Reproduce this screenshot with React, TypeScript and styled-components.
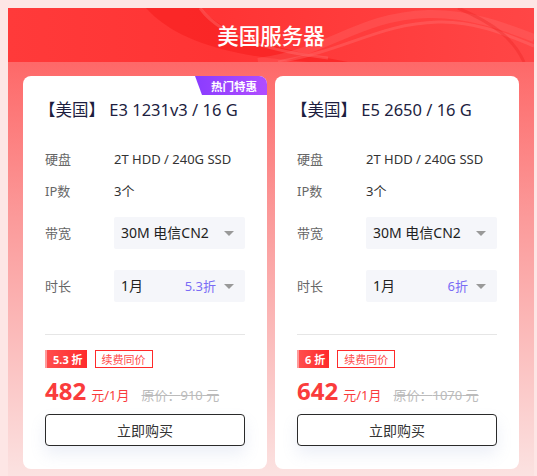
import React from 'react';
import styled, { createGlobalStyle } from 'styled-components';

const GlobalStyle = createGlobalStyle`
	html, body {
		background: #fde6e5;
	}
	body {
		margin: 8px 0 0 8px;
		font-family: 'Noto Sans', 'Noto Sans CJK SC', sans-serif;
		overflow: hidden;
	}
`;

const Panel = styled.div`
	width: 526px;
	min-height: 468px;
	background: linear-gradient(180deg, #ff5757 0%, #fb9a9a 45%, #fbe2e1 100%);
`;

const Header = styled.div`
	position: relative;
	height: 54px;
	display: flex;
	align-items: center;
	justify-content: center;
	background: linear-gradient(90deg, #ff3a3a 0%, #ff3434 40%, #ff4646 100%);
	overflow: hidden;

	& svg {
		position: absolute;
		inset: 0;
	}
`;

const Title = styled.h1`
	position: relative;
	margin: 0 0 2px;
	font-family: 'Noto Sans CJK SC', sans-serif;
	font-size: 21.5px;
	font-weight: 500;
	color: #fff;
`;

const Cards = styled.div`
	display: flex;
	gap: 8px;
	padding: 14px 15px 0;
`;

const Card = styled.div`
	position: relative;
	flex: 1;
	background: #fff;
	border-radius: 8px;
	padding: 22px 22px 23px;
`;

const Badge = styled.div`
	position: absolute;
	top: 0;
	right: 0;
	width: 72px;
	height: 19px;
	padding-left: 6px;
	box-sizing: border-box;
	display: flex;
	align-items: center;
	justify-content: center;
	border-top-right-radius: 8px;
	background: linear-gradient(90deg, #8a3cff 0%, #b04dff 100%);
	clip-path: polygon(0 0, 100% 0, 100% 100%, 7px 100%);
	color: #fff;
	font-family: 'Noto Sans CJK SC', sans-serif;
	font-size: 11.5px;
	font-weight: 700;
`;

const CardTitle = styled.div`
	margin-left: -6px;
	font-size: 16.5px;
	line-height: 24px;
	color: #1d1e3f;
`;

const Row = styled.div<{ $top: number }>`
	display: grid;
	grid-template-columns: 69px 1fr;
	align-items: center;
	margin-top: ${(p) => p.$top}px;
	font-size: 13px;
	line-height: 20px;
`;

const Label = styled.span`
	color: #666;
`;

const Value = styled.span`
	color: #333;
`;

const Select = styled.div`
	display: flex;
	align-items: center;
	height: 32px;
	padding: 0 11px 0 7px;
	background: #f5f6fa;
	border-radius: 2px;
	font-size: 14px;
	color: #222;
`;

const SelectText = styled.span`
	flex: 1;
`;

const Rate = styled.span`
	margin-right: 8px;
	font-size: 13px;
	color: #7a6cf5;
`;

const Caret = styled.i`
	width: 0;
	height: 0;
	border-left: 5px solid transparent;
	border-right: 5px solid transparent;
	border-top: 5px solid #999;
`;

const Divider = styled.div`
	height: 1px;
	margin-top: 32px;
	background: #e6e6e6;
`;

const Tags = styled.div`
	display: flex;
	gap: 8px;
	margin-top: 15px;
`;

const OffTag = styled.span`
	display: flex;
	align-items: center;
	height: 18px;
	padding: 0 4px 0 6px;
	border-left: 2px solid #ff9b9b;
	background: linear-gradient(90deg, #ff4d4d 0%, #ff2b2b 100%);
	color: #fff;
	font-size: 11px;
	font-weight: 700;
`;

const SameTag = styled.span`
	display: flex;
	align-items: center;
	height: 16px;
	padding: 0 6px;
	border: 1px solid #ff2a2a;
	color: #ff4a4a;
	font-size: 11px;
`;

const PriceLine = styled.div`
	display: flex;
	align-items: baseline;
	margin-top: 6px;
	height: 32px;
`;

const Price = styled.span`
	font-size: 24px;
	font-weight: 700;
	color: #fa3c3c;
`;

const Unit = styled.span`
	margin-left: 5px;
	font-size: 13px;
	color: #fa3c3c;
`;

const Origin = styled.span`
	margin-left: 12px;
	font-size: 13px;
	color: #bbb;
	text-decoration: line-through;
`;

const BuyButton = styled.button`
	display: block;
	width: 100%;
	height: 32px;
	margin-top: 8px;
	border: 1px solid #2a2a2a;
	border-radius: 4px;
	background: #fff;
	box-shadow: 0 8px 16px rgba(120, 140, 200, 0.14);
	font-family: 'Noto Sans CJK SC', sans-serif;
	font-size: 14px;
	color: #333;
`;

type Plan = {
	name: string;
	rate: string;
	off: string;
	price: number;
	origin: number;
	hot?: boolean;
};

const plans: Plan[] = [
	{ name: 'E3 1231v3 / 16 G', rate: '5.3折', off: '5.3 折', price: 482, origin: 910, hot: true },
	{ name: 'E5 2650 / 16 G', rate: '6折', off: '6 折', price: 642, origin: 1070 },
];

const Waves = () => (
	<svg width="526" height="54" viewBox="0 0 526 54">
		<path d="M138 0 C165 30 215 48 300 54 L340 54 C260 40 215 25 192 0 Z" fill="#f51c1c" opacity="0.55" />
		<path d="M192 0 C210 25 250 42 320 50" stroke="#ff6a6a" strokeWidth="3" fill="none" opacity="0.45" />
		<path d="M250 54 C320 45 350 8 420 6 C460 5 495 18 526 30" stroke="#ff7a7a" strokeWidth="8" fill="none" opacity="0.25" />
		<path d="M270 54 C340 42 370 16 430 14 C465 13 495 25 526 38" stroke="#ff8080" strokeWidth="3" fill="none" opacity="0.3" />
		<path d="M450 0 C485 15 505 30 516 54" stroke="#e81e1e" strokeWidth="3" fill="none" opacity="0.3" />
	</svg>
);

const PlanCard = ({ plan }: { plan: Plan }) => (
	<Card>
		{plan.hot && <Badge>热门特惠</Badge>}
		<CardTitle>【美国】 {plan.name}</CardTitle>
		<Row $top={27}>
			<Label>硬盘</Label>
			<Value>2T HDD / 240G SSD</Value>
		</Row>
		<Row $top={12}>
			<Label>IP数</Label>
			<Value>3个</Value>
		</Row>
		<Row $top={16}>
			<Label>带宽</Label>
			<Select>
				<SelectText>30M 电信CN2</SelectText>
				<Caret />
			</Select>
		</Row>
		<Row $top={21}>
			<Label>时长</Label>
			<Select>
				<SelectText>1月</SelectText>
				<Rate>{plan.rate}</Rate>
				<Caret />
			</Select>
		</Row>
		<Divider />
		<Tags>
			<OffTag>{plan.off}</OffTag>
			<SameTag>续费同价</SameTag>
		</Tags>
		<PriceLine>
			<Price>{plan.price}</Price>
			<Unit>元/1月</Unit>
			<Origin>原价：{plan.origin} 元</Origin>
		</PriceLine>
		<BuyButton>立即购买</BuyButton>
	</Card>
);

export default function App() {
	return (
		<>
			<GlobalStyle />
			<Panel>
				<Header>
					<Waves />
					<Title>美国服务器</Title>
				</Header>
				<Cards>
					{plans.map((p) => (
						<PlanCard key={p.name} plan={p} />
					))}
				</Cards>
			</Panel>
		</>
	);
}
